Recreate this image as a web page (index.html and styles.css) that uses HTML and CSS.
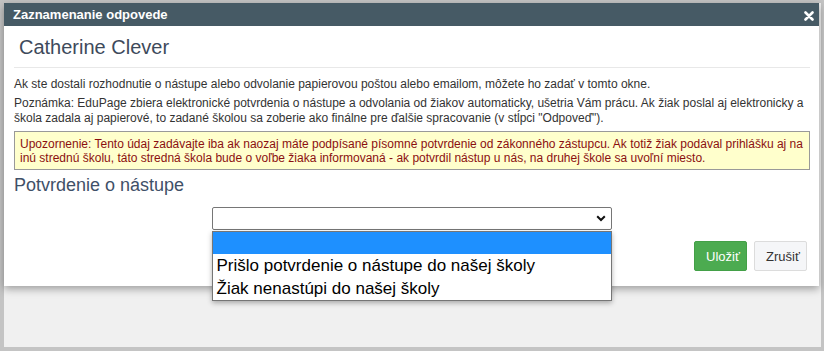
FILE: index.html
```html
<!DOCTYPE html>
<html lang="sk">

<head>
    <meta charset="UTF-8">
    <meta name="viewport" content="width=device-width, initial-scale=1.0">
    <title>Zaznamenanie odpovede</title>
    <link rel="stylesheet" href="styles.css">
</head>

<body>
    <div class="screen">
        <!-- okno -->
        <div class="dialog">
            <div class="dialog-head">
                <span class="dialog-title">Zaznamenanie odpovede</span>
                <span class="close">
                    <svg width="10" height="10" viewBox="0 0 10 10">
                        <path d="M1.5 1.5 L8.5 8.5 M8.5 1.5 L1.5 8.5" stroke="#fff" stroke-width="2.6" stroke-linecap="round" />
                    </svg>
                </span>
            </div>

            <div class="dialog-body">
                <h1 class="student">Catherine Clever</h1>

                <p class="info">Ak ste dostali rozhodnutie o nástupe alebo odvolanie papierovou poštou alebo emailom, môžete ho zadať v tomto okne.</p>
                <p class="info">Poznámka: EduPage zbiera elektronické potvrdenia o nástupe a odvolania od žiakov automaticky, ušetria Vám prácu. Ak žiak poslal aj elektronicky a škola zadala aj papierové, to zadané školou sa zoberie ako finálne pre ďalšie spracovanie (v stĺpci "Odpoveď").</p>

                <div class="warning">Upozornenie: Tento údaj zadávajte iba ak naozaj máte podpísané písomné potvrdenie od zákonného zástupcu. Ak totiž žiak podával prihlášku aj na inú strednú školu, táto stredná škola bude o voľbe žiaka informovaná - ak potvrdil nástup u nás, na druhej škole sa uvoľní miesto.</div>

                <h2 class="section">Potvrdenie o nástupe</h2>

                <div class="select-row">
                    <div class="select-wrap">
                        <div class="select">
                            <svg class="chevron" width="10" height="7" viewBox="0 0 10 7">
                                <path d="M1.2 1.2 L5 5 L8.8 1.2" fill="none" stroke="#111" stroke-width="2" />
                            </svg>
                        </div>
                        <!-- otvorený zoznam -->
                        <div class="options">
                            <div class="option selected">&nbsp;</div>
                            <div class="option">Prišlo potvrdenie o nástupe do našej školy</div>
                            <div class="option">Žiak nenastúpi do našej školy</div>
                        </div>
                    </div>
                </div>
            </div>

            <div class="dialog-foot">
                <button class="btn save">Uložiť</button>
                <button class="btn cancel">Zrušiť</button>
            </div>
        </div>
    </div>
</body>

</html>
```

FILE: styles.css
```css
* {
    margin: 0;
    padding: 0;
    box-sizing: border-box;
}

body {
    background-color: #c4c4c4;
    font-family: "Liberation Sans", Arial, sans-serif;
    height: 351px;
    overflow: hidden;
}

.screen {
    margin: 3px 3px 0 4px;
    height: 344px;
    background-color: #f0f0f0;
}

.dialog {
    width: 815px;
    background-color: #fff;
    box-shadow: 0 3px 8px rgba(0, 0, 0, 0.35);
}

.dialog-head {
    height: 23px;
    background-color: #465a65;
    display: flex;
    align-items: center;
    justify-content: space-between;
    padding: 0 5px 0 9px;
}

.dialog-title {
    color: #fff;
    font-size: 13px;
    font-weight: bold;
}

.close {
    display: flex;
    padding-top: 2px;
}

.dialog-body {
    padding: 0 9px 0 10px;
}

.student {
    font-size: 20px;
    font-weight: normal;
    line-height: 24px;
    color: #3e4a5b;
    padding: 9px 5px 8px;
    border-bottom: 1px solid #e8e8e8;
}

.info {
    font-size: 12px;
    line-height: 15px;
    color: #333;
    margin-top: 4px;
}

.student + .info {
    margin-top: 9px;
}

.warning {
    margin-top: 5px;
    background-color: #ffffcc;
    border: 1px solid #999;
    padding: 5px 5px 4px;
    font-size: 12px;
    line-height: 14px;
    color: #8b1010;
}

.section {
    font-size: 18px;
    font-weight: normal;
    line-height: 22px;
    color: #3f5068;
    margin-top: 4px;
}

.select-row {
    display: flex;
    justify-content: center;
    margin-top: 11px;
    padding-right: 1px;
}

.select-wrap {
    position: relative;
    width: 400px;
}

.select {
    height: 23px;
    border: 1px solid #767676;
    border-radius: 2px;
    background-color: #fff;
    display: flex;
    align-items: center;
    justify-content: flex-end;
    padding-right: 5px;
}

.options {
    position: absolute;
    top: calc(100% + 1px);
    left: 0;
    width: 400px;
    background-color: #fff;
    border: 1px solid #767676;
    box-shadow: 0 2px 5px rgba(0, 0, 0, 0.3);
    z-index: 2;
}

.option {
    height: 23px;
    line-height: 23px;
    padding-left: 4px;
    font-size: 17px;
    color: #000;
    white-space: nowrap;
}

.option.selected {
    height: 22px;
    background-color: #1e90ff;
}

.dialog-foot {
    display: flex;
    justify-content: flex-end;
    gap: 7px;
    padding: 11px 12px 15px 0;
}

.btn {
    height: 30px;
    font-family: "Liberation Sans", Arial, sans-serif;
    font-size: 13px;
    border-radius: 2px;
    padding: 0 11px;
}

.save {
    width: 53px;
    background-color: #4cab50;
    border: 1px solid #43a047;
    color: #fff;
}

.cancel {
    width: 53px;
    background-color: #f5f6f8;
    border: 1px solid #dcdcdc;
    color: #333;
}
```
